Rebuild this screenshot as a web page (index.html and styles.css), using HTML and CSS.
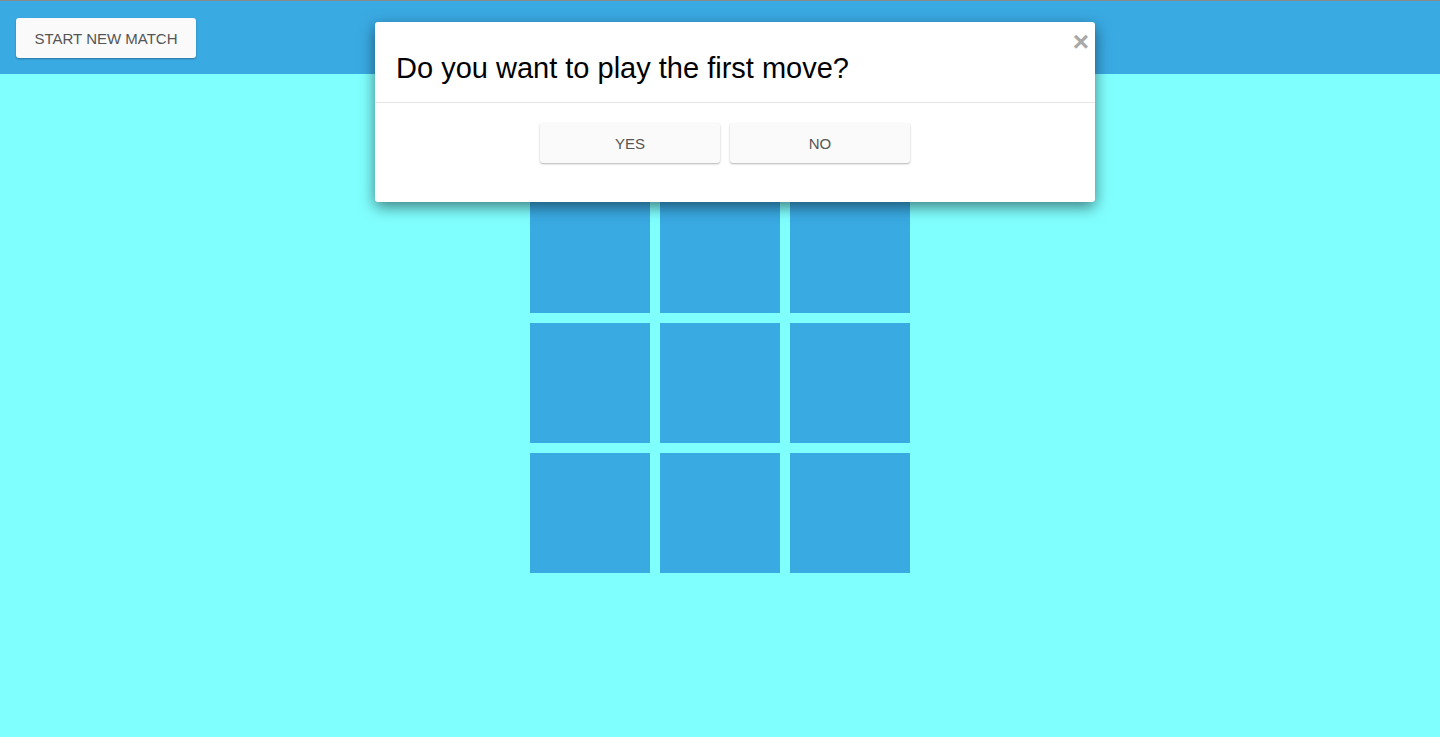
FILE: index.html
```html
<!DOCTYPE html>
<html>
<head>
<meta charset="utf-8">
<link rel="stylesheet" href="styles.css">
</head>
<body>
<header class="topbar">
  <button class="btn btn-start">START NEW MATCH</button>
</header>
<main class="board-wrap">
  <div class="board">
    <div class="cell"></div><div class="cell"></div><div class="cell"></div>
    <div class="cell"></div><div class="cell"></div><div class="cell"></div>
    <div class="cell"></div><div class="cell"></div><div class="cell"></div>
  </div>
</main>
<div class="modal">
  <div class="modal-header">
    <h2 class="modal-title">Do you want to play the first move?</h2>
    <span class="modal-close">&times;</span>
  </div>
  <div class="modal-body">
    <button class="btn btn-choice">YES</button>
    <button class="btn btn-choice">NO</button>
  </div>
</div>
</body>
</html>
```
FILE: styles.css
```css
html, body {
  margin: 0;
  padding: 0;
  height: 100%;
}
body {
  background: #80ffff;
  font-family: "Liberation Sans", Arial, sans-serif;
  border-top: 1px solid #8a8a8a;
  box-sizing: border-box;
  overflow: hidden;
}
.topbar {
  background: #3aaae3;
  height: 73px;
  padding: 17px 16px 0;
  box-sizing: border-box;
}
.btn {
  font-family: "Liberation Sans", Arial, sans-serif;
  font-size: 15px;
  color: #555;
  background: #fafafa;
  border: none;
  border-radius: 3px;
  box-shadow: 0 1px 2px rgba(0, 0, 0, 0.3);
  cursor: pointer;
  padding: 0;
}
.btn-start {
  width: 180px;
  height: 40px;
}
.board-wrap {
  display: flex;
  justify-content: center;
  padding-top: 119px;
}
.board {
  display: grid;
  grid-template-columns: repeat(3, 120px);
  grid-auto-rows: 120px;
  gap: 10px;
}
.cell {
  background: #3aaae3;
}
.modal {
  position: absolute;
  top: 22px;
  left: 375px;
  width: 720px;
  background: #fff;
  border-radius: 3px;
  box-shadow: 0 5px 15px rgba(0, 0, 0, 0.5);
}
.modal-header {
  position: relative;
  padding: 26px 20px 14px 21px;
  border-bottom: 1px solid #e5e5e5;
}
.modal-title {
  margin: 0;
  font-size: 29px;
  font-weight: normal;
  line-height: 40px;
  color: #000;
}
.modal-close {
  position: absolute;
  top: 6px;
  right: 6px;
  font-size: 28px;
  font-weight: bold;
  color: #a8a8a8;
  line-height: 28px;
}
.modal-body {
  display: flex;
  justify-content: center;
  gap: 10px;
  padding: 20px 20px 39px 0;
}
.btn-choice {
  width: 180px;
  height: 40px;
}
```
